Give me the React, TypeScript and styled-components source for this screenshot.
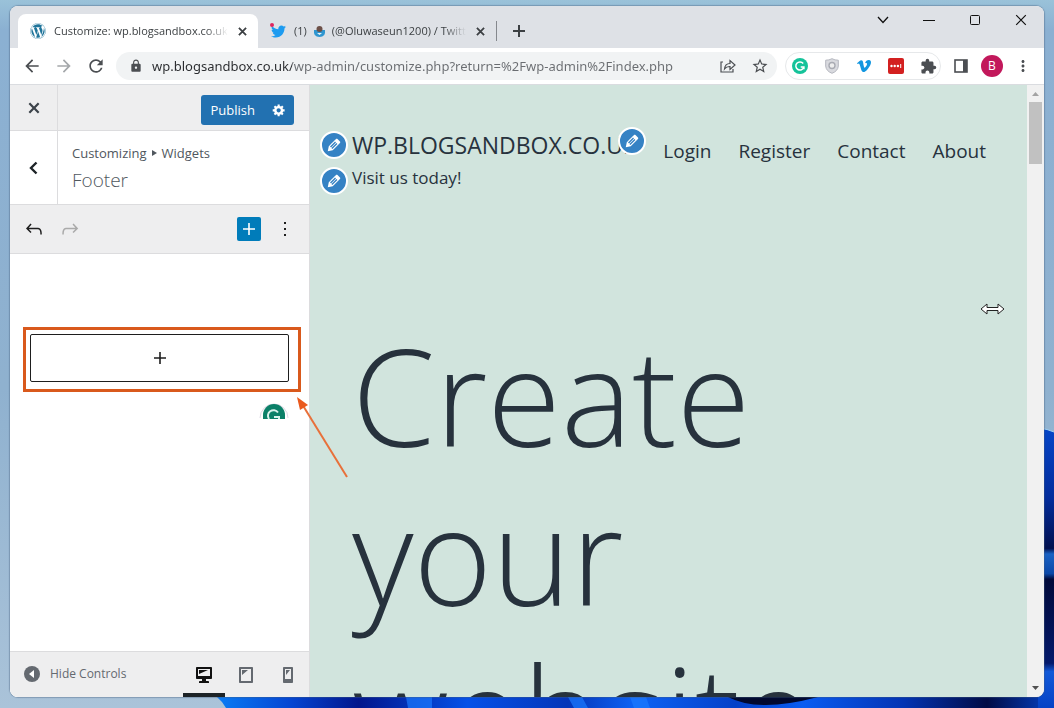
import React from "react";
import styled, { createGlobalStyle, css } from "styled-components";
import { FaTwitter, FaVimeoV, FaWordpress } from "react-icons/fa";
import {
  MdArrowBack,
  MdArrowForward,
  MdRefresh,
  MdLock,
  MdStarBorder,
  MdExtension,
  MdMoreVert,
} from "react-icons/md";

const sans = `"Open Sans", "Noto Sans", sans-serif`;

const GlobalStyle = createGlobalStyle`
  *, *::before, *::after { box-sizing: border-box; }
  body { margin: 0; font-family: ${sans}; color: #3c434a; }
  button, input { font-family: inherit; }
  h1, h2, p { margin: 0; }
`;

const Desktop = styled.div`
  position: relative;
  display: flex;
  height: 100vh;
  padding: 6px 10px 11px;
  background: linear-gradient(180deg, #9ac2d9 0, #8bb0d2 30px, #8fb1cf 55%, #aac3d9 100%);
  overflow: hidden;
`;

const Wallpaper = styled.svg`
  position: absolute;
  right: 0;
  bottom: 0;
  width: 838px;
  height: 282px;
`;

const Window = styled.main`
  position: relative;
  display: flex;
  flex-direction: column;
  flex: 1;
  min-width: 0;
  border-radius: 8px;
  background: #fff;
  overflow: hidden;
  box-shadow: 0 0 1px 1px rgba(70, 95, 125, 0.4);
`;

const IconButton = styled.button<{ $w?: number; $h?: number }>`
  display: inline-flex;
  align-items: center;
  justify-content: center;
  flex: none;
  width: ${(p) => p.$w ?? 24}px;
  height: ${(p) => p.$h ?? 24}px;
  padding: 0;
  border: 0;
  background: none;
  color: inherit;
`;

/* Tab strip */

const TabStrip = styled.header`
  display: flex;
  justify-content: space-between;
  flex: none;
  height: 42px;
  padding-left: 8px;
  background: #dee1e6;
  color: #3c4043;
`;

const Tabs = styled.div`
  display: flex;
  align-items: flex-end;
`;

const Tab = styled.div<{ $active?: boolean }>`
  display: flex;
  align-items: center;
  height: 34px;
  width: ${(p) => (p.$active ? 240 : 238)}px;
  padding: 0 4px 0 12px;
  gap: 8px;
  border-radius: 8px 8px 0 0;
  background: ${(p) => (p.$active ? "#fff" : "transparent")};
`;

const TabTitle = styled.span`
  display: flex;
  align-items: center;
  flex: 1;
  min-width: 0;
  margin-right: -8px;
  gap: 6px;
  font-size: 11px;
  line-height: 16px;
  white-space: nowrap;
  overflow: hidden;
  mask-image: linear-gradient(90deg, #000 86%, transparent 99%);

  svg {
    flex: none;
  }
`;

const TabDivider = styled.span`
  align-self: flex-end;
  width: 1px;
  height: 20px;
  margin: 0 10px 7px 0;
  background: #85888d;
`;

const NewTab = styled(IconButton)`
  margin-bottom: 5px;
`;

const Caption = styled.div`
  display: flex;
  height: 28px;
  color: #111;
`;

/* Toolbar */

const Toolbar = styled.div`
  display: flex;
  align-items: center;
  flex: none;
  height: 37px;
  padding: 0 9px 0 10px;
  gap: 8px;
  border-bottom: 1px solid #dadce0;
  background: #fff;
  color: #4b4e52;
`;

const Address = styled.label`
  display: flex;
  align-items: center;
  flex: 1;
  min-width: 0;
  height: 28px;
  padding: 0 5px 0 13px;
  gap: 8px;
  border-radius: 14px;
  background: #f1f3f4;
`;

const AddressInput = styled.input`
  flex: 1;
  min-width: 0;
  height: 20px;
  padding: 0 0 0 1px;
  border: 0;
  outline: 0;
  font-family: "Noto Sans", "Open Sans", sans-serif;
  font-size: 13px;
  line-height: 20px;
  color: transparent;
  background: linear-gradient(90deg, #2a2c2f 141px, #6a6d71 141px);
  background-clip: text;
`;

const Extensions = styled.div`
  display: flex;
  align-items: center;
  height: 28px;
  padding: 0 0 0 2px;
  gap: 8px;
  border: 1px solid #e6e8ea;
  border-radius: 14px;
`;

const Avatar = styled.button`
  flex: none;
  width: 22px;
  height: 22px;
  padding: 0;
  border: 0;
  border-radius: 50%;
  background: #c2185b;
  color: #fff;
  font-size: 12px;
  line-height: 22px;
`;

/* Page area */

const Page = styled.div`
  display: flex;
  flex: 1;
  min-height: 0;
`;

const Sidebar = styled.aside`
  position: relative;
  display: flex;
  flex-direction: column;
  flex: none;
  width: 300px;
  border-right: 1px solid #dcdcde;
  background: #fff;
`;

const SideHeader = styled.div`
  display: flex;
  align-items: center;
  justify-content: space-between;
  height: 46px;
  padding-right: 15px;
  border-bottom: 1px solid #dcdcde;
  background: #eeeeef;
`;

const SideCell = styled.button`
  display: flex;
  align-items: center;
  justify-content: center;
  align-self: stretch;
  flex: none;
  width: 48px;
  padding: 0;
  border: 0;
  border-right: 1px solid #dcdcde;
  background: none;
  color: #3c434a;
`;

const PublishGroup = styled.div`
  display: flex;
  height: 30px;
  margin-top: 4px;
  border-radius: 3px;
  background: #2271b1;
  color: #fff;
`;

const PublishButton = styled.button`
  padding: 0 9px 0 10px;
  border: 0;
  background: none;
  color: #fff;
  font-size: 13px;
  line-height: 30px;
`;

const PanelTitle = styled.div`
  display: flex;
  height: 74px;
  border-bottom: 1px solid #dcdcde;
`;

const TitleText = styled.div`
  padding: 12px 14px;
  color: #50575e;
`;

const Crumb = styled.p`
  display: flex;
  align-items: center;
  gap: 5px;
  font-size: 13px;
  line-height: 20px;
`;

const PanelName = styled.h2`
  padding-top: 4px;
  font-size: 19px;
  font-weight: 300;
  line-height: 26px;
`;

const BlockToolbar = styled.div`
  display: flex;
  align-items: center;
  height: 49px;
  padding: 0 12px;
  gap: 12px;
  border-bottom: 1px solid #dcdcde;
  background: #eeeeef;
  color: #1e1e1e;
`;

const Spacer = styled.span`
  flex: 1;
`;

const AddBlock = styled(IconButton)`
  border-radius: 2px;
  background: #007cba;
  color: #fff;
`;

const Redo = styled(IconButton)`
  color: #aaa;
`;

const Editor = styled.section`
  flex: 1;
  min-height: 0;
  padding: 73px 8px 0 13px;
`;

const Highlight = styled.div`
  padding: 4px 9px 7px 4px;
  border: 3px solid #d9591c;
`;

const Appender = styled.button`
  display: flex;
  align-items: center;
  justify-content: center;
  width: 100%;
  height: 48px;
  padding: 0;
  border: 1px solid #1e1e1e;
  border-radius: 2px;
  background: #fff;
  color: #1e1e1e;
`;

const GrammarBadge = styled.div`
  display: flex;
  justify-content: flex-end;
  padding: 8px 11px 0 0;
`;

const Arrow = styled.svg`
  position: absolute;
  left: 285px;
  top: 310px;
  z-index: 2;
`;

const SideFooter = styled.footer`
  display: flex;
  align-items: stretch;
  flex: none;
  height: 46px;
  border-top: 1px solid #dcdcde;
  background: #eeeeef;
`;

const HideControls = styled.button`
  display: flex;
  align-items: center;
  flex: 1;
  padding: 0 14px 2px;
  gap: 10px;
  border: 0;
  background: none;
  color: #646970;
  font-size: 12px;
  line-height: 20px;
  white-space: nowrap;
`;

const Device = styled.button<{ $active?: boolean }>`
  display: flex;
  align-items: center;
  justify-content: center;
  width: 42px;
  padding: 4px 0 0;
  border: 0;
  border-bottom: 4px solid transparent;
  background: none;
  color: #646970;
  ${(p) =>
    p.$active &&
    css`
      border-color: #1d2327;
      color: #111;
    `}
`;

/* Site preview */

const Preview = styled.section`
  flex: 1;
  min-width: 0;
  padding: 46px 41px 0 10px;
  background: #d1e4dd;
  color: #27323d;
  overflow: hidden;
`;

const SiteHeader = styled.div`
  display: flex;
  justify-content: space-between;
`;

const Branding = styled.div`
  display: flex;
  flex-direction: column;
  gap: 8px;
`;

const BrandLine = styled.div`
  position: relative;
  display: flex;
  align-items: center;
  height: 28px;
  gap: 4px;
  white-space: nowrap;
`;

const SiteTitle = styled.p`
  font-size: 23px;
  line-height: 28px;
`;

const Tagline = styled.p`
  padding-bottom: 6px;
  font-size: 17px;
  line-height: 22px;
`;

const EditButton = styled.button<{ $over?: boolean }>`
  display: flex;
  align-items: center;
  justify-content: center;
  flex: none;
  width: 28px;
  height: 28px;
  padding: 0;
  border: 2px solid #fff;
  border-radius: 50%;
  background: #3582c4;
  color: #fff;
  ${(p) =>
    p.$over &&
    css`
      position: absolute;
      left: 298px;
      top: -4px;
    `}
`;

const Nav = styled.nav`
  display: flex;
  gap: 27px;
  padding-top: 6px;
`;

const NavLink = styled.a`
  color: inherit;
  font-size: 19px;
  line-height: 28px;
  text-decoration: none;
`;

const Hero = styled.h1`
  padding: 121px 0 0 32px;
  font-size: 134px;
  font-weight: 300;
  line-height: 159px;
`;

const Scrollbar = styled.div`
  display: flex;
  flex-direction: column;
  align-items: center;
  flex: none;
  width: 17px;
  padding: 1px 2px 0;
  background: #f1f1f1;
  color: #505050;
`;

const Thumb = styled.span`
  width: 13px;
  height: 62px;
  background: #c1c1c1;
`;

const Cursor = styled.svg`
  position: absolute;
  right: 39px;
  top: 296px;
`;

type GlyphProps = { d: string; size?: number; box?: number };

const Glyph = ({ d, size = 20, box = 20 }: GlyphProps) => (
  <svg width={size} height={size} viewBox={`0 0 ${box} ${box}`} fill="currentColor" aria-hidden="true">
    <path d={d} />
  </svg>
);

const paths = {
  close: "M14.95 6.46L11.41 10l3.54 3.54-1.41 1.41L10 11.42l-3.53 3.53-1.42-1.42L8.58 10 5.05 6.47l1.42-1.42L10 8.58l3.54-3.53z",
  gear: "M18 12h-2.18c-.17.7-.44 1.35-.81 1.93l1.54 1.54-2.1 2.1-1.54-1.54c-.58.36-1.23.63-1.91.79V19H8v-2.18c-.68-.16-1.33-.43-1.91-.79l-1.54 1.54-2.12-2.12 1.54-1.54c-.36-.58-.63-1.23-.79-1.91H1V9.03h2.17c.16-.7.44-1.35.8-1.94L2.43 5.55l2.1-2.1 1.54 1.54c.58-.37 1.24-.64 1.93-.81V2h3v2.18c.68.16 1.33.43 1.91.79l1.54-1.54 2.12 2.12-1.54 1.54c.36.59.64 1.24.8 1.94H18V12zm-8.5 1.500c1.660 0 3-1.340 3-3s-1.340-3-3-3-3 1.340-3 3 1.340 3 3 3z",
  undo: "M18.3 11.7c-.6-.6-1.4-.9-2.3-.9H6.7l2.9-3.3-1.1-1-4.5 5L8.5 16l1-1-2.7-2.7H16c.5 0 .9.2 1.3.5 1 1 1 3.4 1 4.5v.3h1.5v-.2c0-1.5 0-4.3-1.5-5.7z",
  redo: "M15.6 6.5l-1.1 1 2.9 3.3H8c-.9 0-1.7.3-2.3.9-1.4 1.5-1.4 4.2-1.4 5.6v.2h1.5v-.3c0-1.1 0-3.5 1-4.5.3-.3.7-.5 1.3-.5h9.2L14.5 15l1.1 1.1 4.6-4.6-4.6-5z",
  plus: "M18 11.2h-5.2V6h-1.6v5.2H6v1.6h5.2V18h1.6v-5.2H18z",
  more: "M13 19h-2v-2h2v2zm0-6h-2v-2h2v2zm0-6h-2V5h2v2z",
  desktop: "M3 2h14c.55 0 1 .45 1 1v10c0 .55-.45 1-1 1h-5v2h2c.55 0 1 .45 1 1v1H5v-1c0-.55.45-1 1-1h2v-2H3c-.55 0-1-.45-1-1V3c0-.55.45-1 1-1zm13 9V4H4v7h12zM5 5h9L5 9V5z",
  tablet: "M4 2h12c.55 0 1 .45 1 1v14c0 .55-.45 1-1 1H4c-.55 0-1-.45-1-1V3c0-.55.45-1 1-1zm11 14V4H5v12h10zM6 5h6l-6 5V5z",
  phone: "M6 2h8c.55 0 1 .45 1 1v14c0 .55-.45 1-1 1H6c-.55 0-1-.45-1-1V3c0-.55.45-1 1-1zm7 12V4H7v10h6zM8 5h4l-4 5V5z",
  pencil: "M13.89 3.39l2.71 2.72c.46.46.42 1.24.03 1.64l-8.01 8.02-5.56 1.16 1.16-5.58s7.6-7.63 7.99-8.03c.39-.39 1.22-.39 1.68.07zm-2.73 2.79l-5.59 5.61 1.11 1.11 5.54-5.65zm-2.97 8.23l5.58-5.6-1.07-1.08-5.59 5.6z",
};

const CrossIcon = ({ size = 9, stroke = 2 }: { size?: number; stroke?: number }) => (
  <svg width={size} height={size} viewBox="0 0 10 10" stroke="currentColor" strokeWidth={stroke} aria-hidden="true">
    <path d="M1 1l8 8M9 1l-8 8" />
  </svg>
);

const GrammarIcon = ({ fill, size }: { fill: string; size: number }) => (
  <svg width={size} height={size} viewBox="0 0 18 18" fill="none" aria-hidden="true">
    <circle cx="9" cy="9" r="9" fill={fill} />
    <path d="M12.6 6.2A4.6 4.6 0 1 0 13.3 10.4M9.8 10H13.4V12.6" stroke="#fff" strokeWidth="1.7" />
  </svg>
);

const Edit = ({ label, over }: { label: string; over?: boolean }) => (
  <EditButton $over={over} aria-label={label}>
    <Glyph d={paths.pencil} size={18} />
  </EditButton>
);

const Backdrop = () => (
  <Wallpaper viewBox="0 0 838 282" aria-hidden="true">
    <defs>
      <linearGradient id="petals" x1="0" x2="1">
        <stop offset="0" stopColor="#0a7df5" />
        <stop offset=".09" stopColor="#0545d2" />
        <stop offset=".17" stopColor="#02168c" />
        <stop offset=".3" stopColor="#0551e8" />
        <stop offset=".42" stopColor="#0435b8" />
        <stop offset=".5" stopColor="#0d63f5" />
        <stop offset=".62" stopColor="#0440c8" />
        <stop offset=".7" stopColor="#0a5cf2" />
        <stop offset=".82" stopColor="#0334b4" />
        <stop offset=".92" stopColor="#010b45" />
        <stop offset="1" stopColor="#0442c6" />
      </linearGradient>
      <linearGradient id="edge" x1="0" x2="0" y1="0" y2="1">
        <stop offset="0" stopColor="#0546c8" />
        <stop offset=".25" stopColor="#032c9c" />
        <stop offset=".43" stopColor="#02104f" />
        <stop offset=".45" stopColor="#1a62c4" />
        <stop offset=".52" stopColor="#0b48a8" />
        <stop offset=".54" stopColor="#010a3a" />
        <stop offset=".84" stopColor="#04196b" />
        <stop offset=".87" stopColor="#1259d8" />
        <stop offset="1" stopColor="#0442c6" />
      </linearGradient>
    </defs>
    <path d="M0 270H838V282H10Q6 275 0 270Z" fill="url(#petals)" />
    <path d="M190 271h26v11h-24zM352 271h14l6 11h-14zM414 271h16l4 11h-16z" fill="#1d7bff" opacity=".7" />
    <path d="M512 271q30 16 90 0z" fill="#01082e" />
    <path d="M822 2Q832 3 838 6V282H822Z" fill="url(#edge)" />
    <path d="M822 2Q832 3 838 6" stroke="#9fd0f0" fill="none" />
  </Wallpaper>
);

export default function App() {
  return (
    <>
      <GlobalStyle />
      <Desktop>
        <Backdrop />
        <Window>
          <TabStrip>
            <Tabs>
              <Tab $active>
                <FaWordpress size={16} color="#21759b" />
                <TabTitle>Customize: wp.blogsandbox.co.uk</TabTitle>
                <IconButton aria-label="Close tab">
                  <CrossIcon />
                </IconButton>
              </Tab>
              <Tab>
                <svg width="16" height="16" viewBox="0 0 16 16" aria-hidden="true">
                  <FaTwitter x={1} y={1} size={15} color="#1d9bf0" />
                  <circle cx="2" cy="2" r="2" fill="#e0245e" />
                </svg>
                <TabTitle>
                  (1)
                  <svg width="13" height="13" viewBox="0 0 13 13" aria-hidden="true">
                    <path d="M1 5h11q1 7-5.500 7T1 5z" fill="#2f96d0" />
                    <circle cx="6.500" cy="4" r="3" fill="#6d5048" />
                    <path d="M4 8l2.500 2L9 8z" fill="#e8f3fa" />
                  </svg>
                  (@Oluwaseun1200) / Twitter
                </TabTitle>
                <IconButton aria-label="Close tab">
                  <CrossIcon />
                </IconButton>
              </Tab>
              <TabDivider />
              <NewTab aria-label="New tab">
                <svg width="12" height="12" viewBox="0 0 12 12" stroke="currentColor" strokeWidth="2">
                  <path d="M6 0v12M0 6h12" />
                </svg>
              </NewTab>
            </Tabs>
            <Caption>
              <IconButton $w={46} $h={28} aria-label="Search tabs">
                <svg width="12" height="8" viewBox="0 0 12 8" fill="none" stroke="currentColor" strokeWidth="1.300">
                  <path d="M1 1l5 5.500L11 1" />
                </svg>
              </IconButton>
              <IconButton $w={46} $h={28} aria-label="Minimize">
                <svg width="12" height="2" viewBox="0 0 12 2" fill="currentColor">
                  <path d="M0 1h12v1H0z" />
                </svg>
              </IconButton>
              <IconButton $w={46} $h={28} aria-label="Maximize">
                <svg width="10" height="10" viewBox="0 0 10 10" fill="none" stroke="currentColor">
                  <rect x=".5" y=".5" width="9" height="9" rx="1" />
                </svg>
              </IconButton>
              <IconButton $w={46} $h={28} aria-label="Close">
                <CrossIcon size={12} stroke={1} />
              </IconButton>
            </Caption>
          </TabStrip>

          <Toolbar>
            <IconButton aria-label="Back"><MdArrowBack size={20} /></IconButton>
            <IconButton aria-label="Forward"><MdArrowForward size={20} color="#a5a8ab" /></IconButton>
            <IconButton aria-label="Reload"><MdRefresh size={20} /></IconButton>
            <Address>
              <MdLock size={14} />
              <AddressInput
                aria-label="Address"
                defaultValue="wp.blogsandbox.co.uk/wp-admin/customize.php?return=%2Fwp-admin%2Findex.php"
              />
              <IconButton aria-label="Share">
                <svg width="16" height="16" viewBox="0 0 16 16" fill="none" stroke="currentColor" strokeWidth="1.200">
                  <path d="M3 4H1v10h12v-3M4.500 11Q5 5.500 10 5.500V2.500L15 7l-5 4.500V8.500Q6.500 8.300 4.500 11z" />
                </svg>
              </IconButton>
              <IconButton aria-label="Bookmark"><MdStarBorder size={18} /></IconButton>
            </Address>
            <Extensions>
              <IconButton aria-label="Writing assistant"><GrammarIcon fill="#15c39a" size={16} /></IconButton>
              <IconButton aria-label="Shield">
                <svg width="14" height="16" viewBox="0 0 14 16" fill="none">
                  <path d="M7 .7Q10 2.300 13.300 2.200V8Q13 13 7 15.300Q1 13 .7 8V2.200Q4 2.300 7 .7z" fill="#d9dadf" stroke="#b4b6be" />
                  <circle cx="7" cy="7.500" r="3" fill="#eee" stroke="#a9abb3" strokeWidth="1.400" />
                </svg>
              </IconButton>
              <IconButton aria-label="Vimeo"><FaVimeoV size={16} color="#1296e0" /></IconButton>
              <IconButton aria-label="Passwords">
                <svg width="16" height="16" viewBox="0 0 16 16">
                  <rect width="16" height="16" rx="2" fill="#d32020" />
                  <circle cx="3.500" cy="8" r="1.200" fill="#fff" />
                  <circle cx="6.700" cy="8" r="1.200" fill="#fff" />
                  <circle cx="9.900" cy="8" r="1.200" fill="#fff" />
                  <path d="M12.200 6h1v4h-1z" fill="#fff" />
                </svg>
              </IconButton>
              <IconButton aria-label="Extensions"><MdExtension size={17} /></IconButton>
            </Extensions>
            <IconButton aria-label="Side panel">
              <svg width="14" height="14" viewBox="0 0 14 14" fill="none">
                <rect x="1" y="1" width="12" height="12" stroke="currentColor" strokeWidth="1.600" />
                <path d="M9 1h4v12H9z" fill="currentColor" />
              </svg>
            </IconButton>
            <Avatar>B</Avatar>
            <IconButton aria-label="Menu"><MdMoreVert size={18} /></IconButton>
          </Toolbar>

          <Page>
            <Sidebar>
              <SideHeader>
                <SideCell aria-label="Close customizer"><Glyph d={paths.close} size={22} /></SideCell>
                <PublishGroup>
                  <PublishButton>Publish</PublishButton>
                  <IconButton $w={30} $h={30} aria-label="Publish settings"><Glyph d={paths.gear} size={14} /></IconButton>
                </PublishGroup>
              </SideHeader>
              <PanelTitle>
                <SideCell aria-label="Back">
                  <svg width="9" height="14" viewBox="0 0 9 14" fill="none" stroke="#1d2327" strokeWidth="2.400">
                    <path d="M7.500 1.500L2 7l5.500 5.500" />
                  </svg>
                </SideCell>
                <TitleText>
                  <Crumb>
                    Customizing
                    <svg width="5" height="6" viewBox="0 0 5 6" fill="currentColor"><path d="M0 0l5 3-5 3z" /></svg>
                    Widgets
                  </Crumb>
                  <PanelName>Footer</PanelName>
                </TitleText>
              </PanelTitle>
              <BlockToolbar>
                <IconButton aria-label="Undo"><Glyph d={paths.undo} size={24} box={24} /></IconButton>
                <Redo aria-label="Redo"><Glyph d={paths.redo} size={24} box={24} /></Redo>
                <Spacer />
                <AddBlock aria-label="Add block"><Glyph d={paths.plus} size={24} box={24} /></AddBlock>
                <IconButton aria-label="Options"><Glyph d={paths.more} size={24} box={24} /></IconButton>
              </BlockToolbar>
              <Editor>
                <Highlight>
                  <Appender aria-label="Add block"><Glyph d={paths.plus} size={24} box={24} /></Appender>
                </Highlight>
                <GrammarBadge>
                  <svg width="32" height="20" viewBox="0 0 32 20" fill="none">
                    <path d="M2 18A14 14 0 0 1 30 18" stroke="#ddd8e4" />
                    <path d="M5 19V15A11 11 0 0 1 27 15V19Z" fill="#0b8068" />
                    <path d="M20 12.500A5.500 5.500 0 0 0 11 19M16 17H21V19" stroke="#d9f2ec" strokeWidth="2" />
                  </svg>
                </GrammarBadge>
              </Editor>
              <Arrow width="56" height="86" viewBox="0 0 56 86" aria-hidden="true">
                <path d="M52 82L7 9" stroke="#e8703a" strokeWidth="2" />
                <path d="M2 2l11 8-8 5z" fill="#ea5a1e" />
              </Arrow>
              <SideFooter>
                <HideControls>
                  <svg width="16" height="16" viewBox="0 0 16 16">
                    <circle cx="8" cy="8" r="8" fill="#646970" />
                    <path d="M10 4v8L5 8z" fill="#fff" />
                  </svg>
                  Hide Controls
                </HideControls>
                <Device $active aria-label="Desktop preview"><Glyph d={paths.desktop} /></Device>
                <Device aria-label="Tablet preview"><Glyph d={paths.tablet} /></Device>
                <Device aria-label="Mobile preview"><Glyph d={paths.phone} /></Device>
              </SideFooter>
            </Sidebar>

            <Preview>
              <SiteHeader>
                <Branding>
                  <BrandLine>
                    <Edit label="Edit site title" />
                    <SiteTitle>WP.BLOGSANDBOX.CO.UK</SiteTitle>
                    <Edit label="Edit menu" over />
                  </BrandLine>
                  <BrandLine>
                    <Edit label="Edit tagline" />
                    <Tagline>Visit us today!</Tagline>
                  </BrandLine>
                </Branding>
                <Nav>
                  <NavLink href="#login">Login</NavLink>
                  <NavLink href="#register">Register</NavLink>
                  <NavLink href="#contact">Contact</NavLink>
                  <NavLink href="#about">About</NavLink>
                </Nav>
              </SiteHeader>
              <Hero>Create your website</Hero>
            </Preview>

            <Scrollbar>
              <IconButton $w={13} $h={16} aria-label="Scroll up">
                <svg width="7" height="4" viewBox="0 0 7 4" fill="#a3a3a3"><path d="M0 4l3.500-4L7 4z" /></svg>
              </IconButton>
              <Thumb />
              <Spacer />
              <IconButton $w={13} $h={18} aria-label="Scroll down">
                <svg width="7" height="4" viewBox="0 0 7 4" fill="currentColor"><path d="M0 0h7L3.500 4z" /></svg>
              </IconButton>
            </Scrollbar>
          </Page>
          <Cursor width="25" height="14" viewBox="0 0 25 14" aria-hidden="true">
            <path d="M1 7l6-5v3.500h11V2l6 5-6 5V8.500H7V12z" fill="#fff" stroke="#222" />
          </Cursor>
        </Window>
      </Desktop>
    </>
  );
}
